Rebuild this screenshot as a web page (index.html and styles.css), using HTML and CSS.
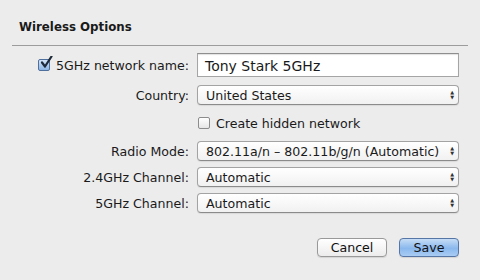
FILE: index.html
```html
<!DOCTYPE html>
<html lang="en">
<head>
    <meta charset="UTF-8">
    <title>Wireless Options</title>
    <link rel="stylesheet" href="styles.css">
</head>
<body>
<div class="panel">
    <h2 class="panel-title">Wireless Options</h2>

    <div class="form-grid">
        <div class="label label-check">
            <span class="checkbox checked">
                <svg width="14" height="14" viewBox="0 0 14 14"><path d="M3 6.5 L6 10.5 L12.5 0.5" fill="none" stroke="#1d2a3a" stroke-width="2.2" stroke-linecap="round" stroke-linejoin="round"/></svg>
            </span>
            5GHz network name:
        </div>
        <div class="control control-first"><div class="text-input">Tony Stark 5GHz</div></div>

        <div class="label">Country:</div>
        <div class="control">
            <div class="select"><span>United States</span><span class="arrows">&#9650;<br>&#9660;</span></div>
        </div>

        <div class="label"></div>
        <div class="control check-row">
            <span class="checkbox"></span>
            Create hidden network
        </div>

        <div class="label">Radio Mode:</div>
        <div class="control">
            <div class="select"><span>802.11a/n – 802.11b/g/n (Automatic)</span><span class="arrows">&#9650;<br>&#9660;</span></div>
        </div>

        <div class="label">2.4GHz Channel:</div>
        <div class="control">
            <div class="select"><span>Automatic</span><span class="arrows">&#9650;<br>&#9660;</span></div>
        </div>

        <div class="label">5GHz Channel:</div>
        <div class="control">
            <div class="select"><span>Automatic</span><span class="arrows">&#9650;<br>&#9660;</span></div>
        </div>
    </div>

    <div class="actions">
        <button class="btn">Cancel</button>
        <button class="btn btn-primary">Save</button>
    </div>
</div>
</body>
</html>
```

FILE: styles.css
```css
body {
    margin: 0;
    background-color: #ececec;
    font-family: 'DejaVu Sans', sans-serif;
    font-size: 12.6px;
    color: #1a1a1a;
}
.panel {
    width: 480px;
    height: 280px;
}
.panel-title {
    margin: 0 12px;
    padding: 20px 0 10px 7px;
    font-size: 11.8px;
    line-height: 15px;
    font-weight: bold;
    border-bottom: 1px solid #9c9c9c;
}
.form-grid {
    display: grid;
    grid-template-columns: 189px 262px;
    column-gap: 8px;
    row-gap: 6px;
    margin-top: 7px;
}
.label {
    display: flex;
    align-items: center;
    justify-content: flex-end;
    white-space: nowrap;
}
.label-check {
    gap: 6px;
    padding-bottom: 2px;
}
.control {
    display: flex;
    align-items: center;
    min-height: 20px;
}
.control-first {
    padding-bottom: 2px;
}
.check-row {
    height: 24px;
    gap: 6px;
    padding-left: 1px;
}
.text-input {
    width: 100%;
    height: 24px;
    box-sizing: border-box;
    padding: 3px 7px 0;
    background: #fff;
    border: 1px solid #a5a5a5;
    border-top-color: #8e8e8e;
    box-shadow: inset 0 1px 1px rgba(0, 0, 0, 0.12);
    font-size: 14px;
    line-height: 18px;
}
.select {
    width: 100%;
    height: 20px;
    box-sizing: border-box;
    display: flex;
    align-items: center;
    justify-content: space-between;
    padding: 0 4px 0 8px;
    background: linear-gradient(#ffffff, #f1f1f1);
    border: 1px solid #a3a3a3;
    border-bottom-color: #8b8b8b;
    border-radius: 4px;
    box-shadow: 0 1px 1px rgba(0, 0, 0, 0.08);
    white-space: nowrap;
}
.arrows {
    font-size: 5px;
    line-height: 5px;
    color: #333;
    text-align: center;
}
.checkbox {
    display: inline-block;
    position: relative;
    width: 12px;
    height: 12px;
    box-sizing: border-box;
    border: 1px solid #8c8c8c;
    border-radius: 2px;
    background: linear-gradient(#ffffff, #e6e6e6);
    flex-shrink: 0;
}
.checkbox.checked {
    border-color: #4f6f9c;
    background: linear-gradient(#d4e5f8, #8db6e4);
}
.checkbox svg {
    position: absolute;
    left: 0;
    top: -4px;
}
.actions {
    display: flex;
    justify-content: flex-end;
    gap: 12px;
    margin: 25px 21px 0 0;
}
.btn {
    height: 19px;
    box-sizing: border-box;
    padding: 0;
    font-family: 'DejaVu Sans', sans-serif;
    font-size: 12.6px;
    line-height: 16px;
    color: #111;
    border: 1px solid #999;
    border-radius: 4px;
    background: linear-gradient(#ffffff, #ececec);
    box-shadow: 0 1px 1px rgba(0, 0, 0, 0.1);
    width: 70px;
}
.btn-primary {
    width: 60px;
    border-color: #5677a6;
    background: linear-gradient(#c6ddf6, #8ab8ee 55%, #a9cdf4);
}
```
